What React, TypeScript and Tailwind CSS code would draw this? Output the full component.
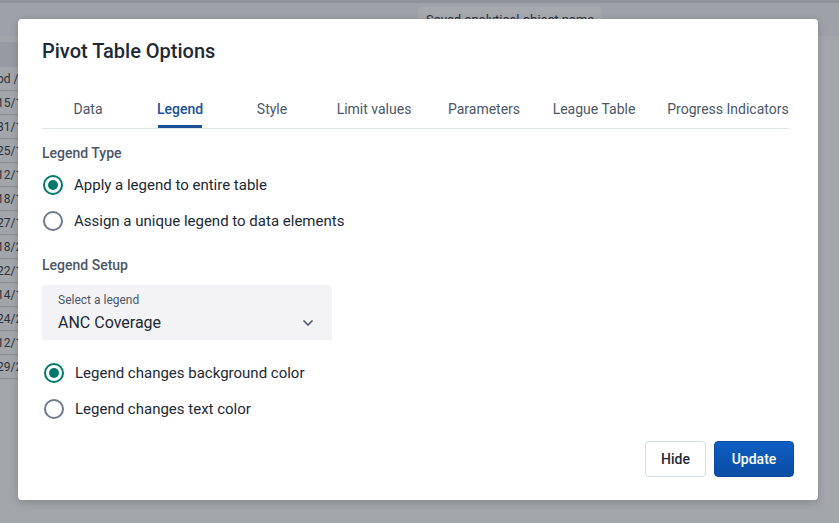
import { ChevronDown } from 'lucide-react'

const TABS: [string, string][] = [
  ['Data', 'w-[92px]'],
  ['Legend', 'w-[92px]'],
  ['Style', 'w-[92px]'],
  ['Limit values', 'w-[112px]'],
  ['Parameters', 'w-[108px]'],
  ['League Table', 'w-[112px]'],
  ['Progress Indicators', 'w-[156px]'],
]
const DATES = ['15/1', '31/1', '25/1', '12/1', '18/1', '27/1', '18/2', '22/1', '14/1', '24/2', '12/1', '29/2']

function Radio({ checked, label }: { checked: boolean; label: string }) {
  return (
    <label className="flex items-center gap-[11px] h-9 cursor-pointer">
      <span
        className={`w-[20px] h-[20px] rounded-full border-2 flex items-center justify-center ${
          checked ? 'border-[#00796b]' : 'border-[#6e7a8a]'
        }`}
      >
        {checked && <span className="w-[10px] h-[10px] rounded-full bg-[#00796b]" />}
      </span>
      <span className="text-[15px] text-[#212934]">{label}</span>
    </label>
  )
}

export default function App() {
  return (
    <div className="relative w-[839px] h-[523px] overflow-hidden bg-[#a2a5aa] font-['Roboto',sans-serif]">
      {/* Background page (dimmed) */}
      <div className="h-[3px] bg-[#8f9399]" />
      <div className="h-[33px] bg-[#9ea2a8] relative">
        <div className="absolute left-[418px] top-[4px] h-[26px] px-2 rounded bg-[#a5a8ad] text-[13px] text-[#2c3238] leading-[26px]">
          Saved analytical object name
        </div>
      </div>
      <div className="mt-[6px] w-[60px] border-r border-[#8a8e94]">
        <div className="h-[25px] bg-[#979ba1]" />
        {['od / Org unit', ...DATES.map((d) => d + '/2023')].map((d, i) => (
          <div
            key={i}
            className="h-[24px] -ml-[3px] border-b border-[#8a8e94] text-[12px] text-[#2c3238] leading-[24px] whitespace-nowrap"
          >
            {d}
          </div>
        ))}
      </div>

      {/* Modal */}
      <div className="absolute left-[18px] top-[19px] w-[800px] h-[481px] bg-white rounded-[4px] shadow-[0_2px_8px_rgba(0,0,0,0.18)] flex flex-col">
        <div className="px-6 pt-[20px]">
          <h2 className="text-[20px] font-medium text-[#212934] leading-[24px]">Pivot Table Options</h2>
        </div>

        {/* Tabs */}
        <div className="ml-6 mt-[27px] w-[747px] border-b border-[#e0e5ea] flex overflow-hidden">
          {TABS.map(([t, w]) => (
            <div
              key={t}
              className={`relative shrink-0 ${w} h-[38px] flex items-center justify-center text-[14px] whitespace-nowrap ${
                t === 'Legend' ? 'text-[#1a4f9c] font-medium' : 'text-[#4a5768]'
              }`}
            >
              {t}
              {t === 'Legend' && (
                <span className="absolute bottom-0 left-1/2 -translate-x-1/2 w-[44px] h-[3px] bg-[#1a4f9c]" />
              )}
            </div>
          ))}
        </div>

        <div className="px-6 pt-[15px] flex-1">
          <div className="text-[14px] font-medium text-[#4a5768] leading-[18px]">Legend Type</div>
          <div className="mt-[5px] pl-[1px]">
            <Radio checked label="Apply a legend to entire table" />
            <Radio checked={false} label="Assign a unique legend to data elements" />
          </div>

          <div className="mt-[17px] text-[14px] font-medium text-[#4a5768] leading-[18px]">Legend Setup</div>
          <div className="mt-[11px] w-[290px] h-[55px] bg-[#f3f3f5] rounded-t-[4px] px-4 pt-[8px] relative">
            <div className="text-[12px] text-[#4a5768] leading-[15px]">Select a legend</div>
            <div className="text-[16px] text-[#212934] leading-[22px] mt-[4px]">ANC Coverage</div>
            <ChevronDown className="absolute right-[16px] top-[30px] w-[16px] h-[16px] text-[#4a5768]" strokeWidth={2.5} />
          </div>

          <div className="mt-[15px] pl-[2px]">
            <Radio checked label="Legend changes background color" />
            <Radio checked={false} label="Legend changes text color" />
          </div>
        </div>

        <div className="flex justify-end gap-2 px-6 pb-[23px]">
          <button className="h-[36px] px-[15px] rounded-[4px] border border-[#d5dde5] bg-white text-[14px] text-[#212934] font-medium">
            Hide
          </button>
          <button className="h-[36px] w-[80px] rounded-[4px] border border-[#0d4b9e] bg-gradient-to-b from-[#0d5ec4] to-[#0a4da3] text-[14px] text-white font-medium">
            Update
          </button>
        </div>
      </div>
    </div>
  )
}
